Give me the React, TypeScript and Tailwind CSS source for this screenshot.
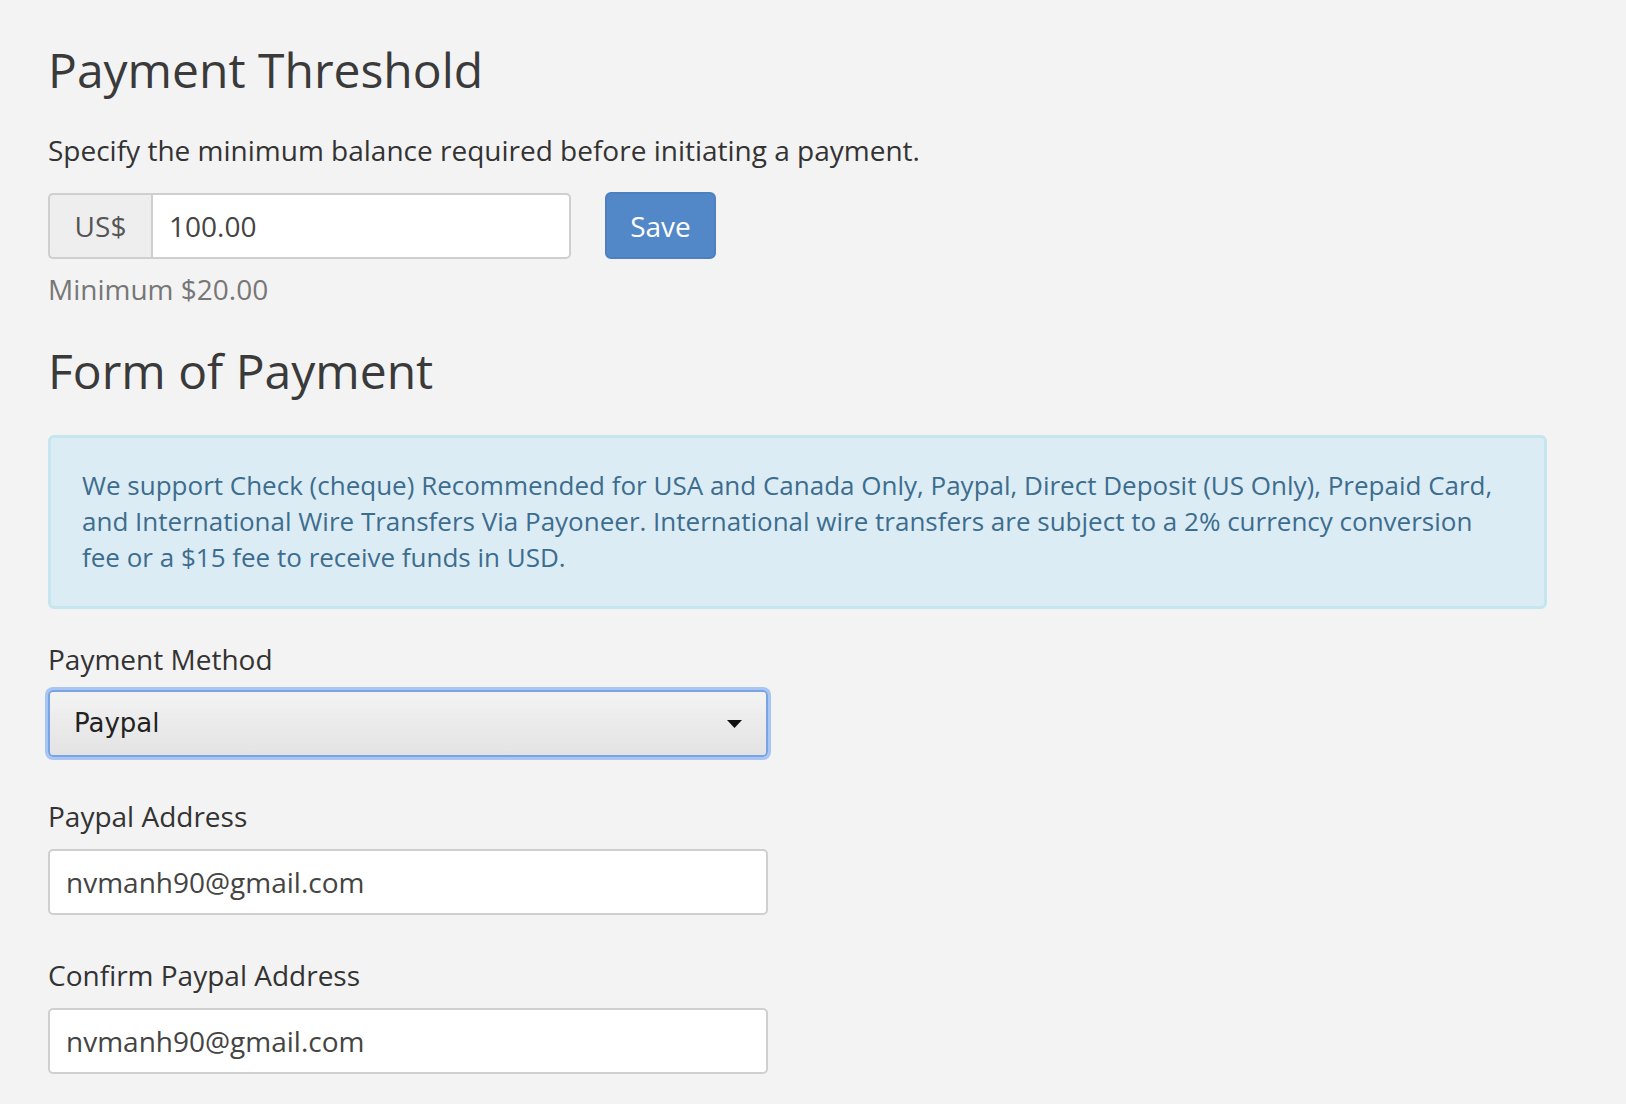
export default function App() {
  return (
    <div className="min-h-screen bg-[#f3f3f3] font-['Open_Sans',sans-serif] text-[#333]">
      <div className="pl-[48px] pr-[79px] pt-[42px] pb-10">
        {/* Payment threshold */}
        <h2 className="text-[48px] leading-[55px] font-normal text-[#3a3a3a]">Payment Threshold</h2>
        <p className="mt-[33px] text-[28px] leading-[40px] text-[#333]">
          Specify the minimum balance required before initiating a payment.
        </p>

        <div className="mt-[22px] flex items-center gap-[34px]">
          <div className="flex h-[66px] w-[523px]">
            <span className="flex w-[103px] items-center justify-center rounded-l-[5px] border-2 border-r-0 border-[#cfcfcf] bg-[#eeeeee] text-[28px] text-[#555]">
              US$
            </span>
            <input
              readOnly
              defaultValue="100.00"
              className="min-w-0 flex-1 rounded-r-[5px] border-2 border-[#cfcfcf] bg-white px-[16px] text-[28px] text-[#444] outline-none"
            />
          </div>
          <button className="h-[67px] w-[111px] rounded-[6px] border-2 border-[#4c80bf] bg-[#5288c8] text-[28px] font-medium text-white">
            Save
          </button>
        </div>
        <p className="mt-[10px] text-[28px] leading-[40px] text-[#777]">Minimum $20.00</p>

        {/* Form of payment */}
        <h2 className="mt-[34px] text-[48px] leading-[55px] font-normal text-[#3a3a3a]">Form of Payment</h2>

        <div className="mt-[37px] rounded-[6px] border-[3px] border-[#c6e6ef] bg-[#dcecf5] px-[31px] pt-[29px] pb-[31px] text-[26px] leading-[36px] text-[#3d6d8e]">
          We support Check (cheque) Recommended for USA and Canada Only, Paypal, Direct Deposit (US Only), Prepaid
          Card, and International Wire Transfers Via Payoneer. International wire transfers are subject to a 2%
          currency conversion fee or a $15 fee to receive funds in USD.
        </div>

        <div className="w-[720px]">
          <label className="mt-[30px] block text-[28px] leading-[40px] text-[#333]">Payment Method</label>
          <div className="mt-[11px] flex h-[67px] items-center justify-between rounded-[5px] border-2 border-[#7aa3e4] bg-gradient-to-b from-[#f3f3f3] to-[#e3e3e3] pl-[24px] pr-[24px] shadow-[0_0_0_3px_#a8c6f4] font-['DejaVu_Sans',sans-serif] text-[26px] text-[#222]">
            <span>Paypal</span>
            <svg width="15" height="8" viewBox="0 0 15 8">
              <path d="M0 0 L15 0 L7.5 8 Z" fill="#111" />
            </svg>
          </div>

          <label className="mt-[39px] block text-[28px] leading-[40px] text-[#333]">Paypal Address</label>
          <input
            readOnly
            defaultValue="nvmanh90@gmail.com"
            className="mt-[13px] block h-[66px] w-full rounded-[5px] border-2 border-[#cfcfcf] bg-white px-[16px] text-[28px] text-[#444] outline-none"
          />

          <label className="mt-[40px] block text-[28px] leading-[40px] text-[#333]">Confirm Paypal Address</label>
          <input
            readOnly
            defaultValue="nvmanh90@gmail.com"
            className="mt-[13px] block h-[66px] w-full rounded-[5px] border-2 border-[#cfcfcf] bg-white px-[16px] text-[28px] text-[#444] outline-none"
          />
        </div>
      </div>
    </div>
  );
}
